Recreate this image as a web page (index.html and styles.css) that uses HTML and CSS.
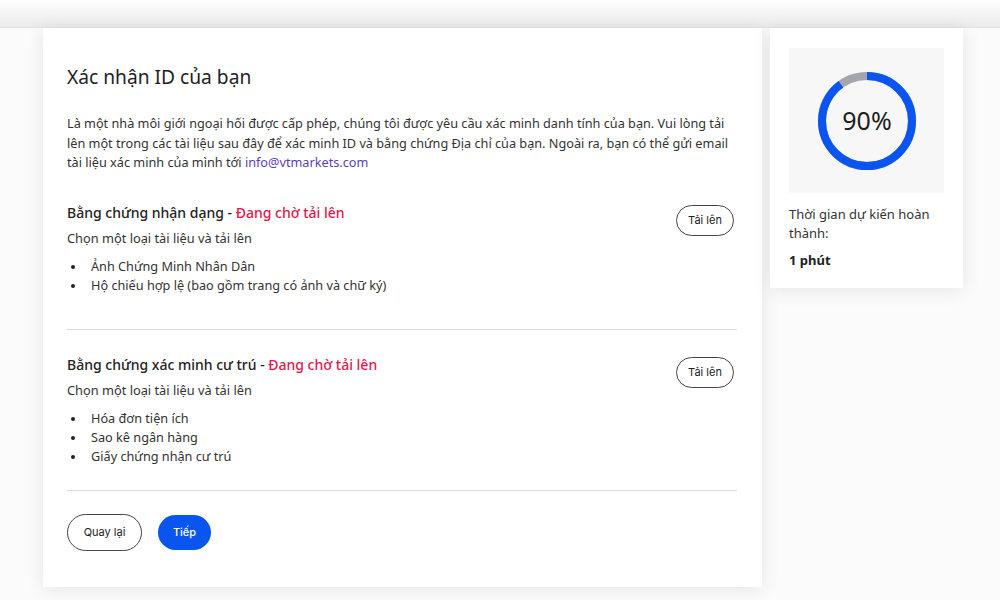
FILE: index.html
```html
<!DOCTYPE html>
<html lang="vi">
<head>
<meta charset="utf-8">
<title>Xác nhận ID</title>
<link rel="stylesheet" href="styles.css">
</head>
<body>
<div class="topband"></div>
<div class="layout">
  <main class="card main-card">
    <h1 class="title">Xác nhận ID của bạn</h1>
    <p class="intro">Là một nhà môi giới ngoại hối được cấp phép, chúng tôi được yêu cầu xác minh danh tính của bạn. Vui lòng tải lên một trong các tài liệu sau đây để xác minh ID và bằng chứng Địa chỉ của bạn. Ngoài ra, bạn có thể gửi email tài liệu xác minh của mình tới <a class="link" href="#">info@vtmarkets.com</a></p>

    <section class="doc doc-first">
      <div class="doc-body">
        <h2 class="doc-title">Bằng chứng nhận dạng - <span class="pending">Đang chờ tải lên</span></h2>
        <div class="doc-sub">Chọn một loại tài liệu và tải lên</div>
        <ul class="doc-list">
          <li>Ảnh Chứng Minh Nhân Dân</li>
          <li>Hộ chiếu hợp lệ (bao gồm trang có ảnh và chữ ký)</li>
        </ul>
      </div>
      <button class="btn-outline upload">Tải lên</button>
    </section>

    <section class="doc doc-second">
      <div class="doc-body">
        <h2 class="doc-title">Bằng chứng xác minh cư trú - <span class="pending">Đang chờ tải lên</span></h2>
        <div class="doc-sub">Chọn một loại tài liệu và tải lên</div>
        <ul class="doc-list">
          <li>Hóa đơn tiện ích</li>
          <li>Sao kê ngân hàng</li>
          <li>Giấy chứng nhận cư trú</li>
        </ul>
      </div>
      <button class="btn-outline upload">Tải lên</button>
    </section>

    <div class="actions">
      <button class="btn-outline back">Quay lại</button>
      <button class="btn-primary">Tiếp</button>
    </div>
  </main>

  <aside class="card side-card">
    <div class="progress-box">
      <svg class="ring" width="100" height="100" viewBox="0 0 100 100">
        <circle cx="50" cy="50" r="45" fill="none" stroke="#a3a6ad" stroke-width="8"/>
        <circle cx="50" cy="50" r="45" fill="none" stroke="#0a55f0" stroke-width="8" stroke-dasharray="254.47 282.74" transform="rotate(-90 50 50)"/>
        <text x="50" y="59" text-anchor="middle" class="ring-text">90%</text>
      </svg>
    </div>
    <div class="eta-label">Thời gian dự kiến hoàn thành:</div>
    <div class="eta-value">1 phút</div>
  </aside>
</div>
</body>
</html>
```
FILE: styles.css
```css
* { box-sizing: border-box; }
html, body { margin: 0; padding: 0; }
body {
  width: 1000px;
  height: 600px;
  overflow: hidden;
  background: #fbfbfb;
  font-family: "Noto Sans", "Open Sans", sans-serif;
  color: #2b2b2b;
}
.topband {
  height: 28px;
  background: linear-gradient(#fdfdfd, #ebebeb);
  border-bottom: 1px solid #e4e4e4;
}
.layout {
  display: flex;
  align-items: flex-start;
  gap: 8px;
  padding-left: 43px;
}
.card {
  background: #fff;
  box-shadow: 0 2px 18px rgba(0, 0, 0, 0.09);
}
.main-card {
  width: 719px;
  height: 559px;
  padding: 36px 25px 0 24px;
}
.title {
  margin: 0;
  font-size: 19.2px;
  line-height: 26px;
  font-weight: 400;
  color: #1e1e1e;
}
.intro {
  margin: 24px 0 0;
  font-size: 12.7px;
  line-height: 19.5px;
  color: #333;
}
.link { color: #5a3fb8; text-decoration: none; }
.doc {
  display: flex;
  justify-content: space-between;
  align-items: flex-start;
  border-bottom: 1px solid #d9d9d9;
}
.doc-first { margin-top: 30px; padding-bottom: 34px; }
.doc-second { padding-top: 25px; padding-bottom: 24px; }
.doc-title {
  margin: 0;
  font-size: 14px;
  line-height: 20px;
  font-weight: 500;
  color: #222;
}
.pending { color: #e0194d; }
.doc-sub {
  margin-top: 5px;
  font-size: 12.8px;
  line-height: 20px;
  color: #333;
}
.doc-list {
  list-style: none;
  margin: 9px 0 0;
  padding: 0;
  font-size: 12.7px;
  line-height: 19px;
  color: #333;
}
.doc-list li {
  display: flex;
  align-items: center;
  height: 19px;
}
.doc-list li::before {
  content: "";
  flex: none;
  width: 4px;
  height: 4px;
  border-radius: 50%;
  background: #222;
  margin: 1px 16px 0 4px;
}
.btn-outline, .btn-primary {
  font-family: Inter, "Noto Sans", sans-serif;
  font-size: 11px;
  cursor: pointer;
  border-radius: 999px;
}
.btn-outline {
  background: #fff;
  border: 1px solid #444;
  color: #222;
}
.upload {
  width: 58px;
  height: 31px;
  margin: 2px 3px 0 0;
  padding: 0;
}
.actions {
  display: flex;
  align-items: center;
  gap: 16px;
  margin-top: 23px;
}
.back {
  width: 75px;
  height: 37px;
  padding: 0;
}
.btn-primary {
  width: 53px;
  height: 35px;
  padding: 0;
  border: none;
  background: #0a55f0;
  color: #fff;
  font-weight: 500;
}
.side-card {
  width: 193px;
  padding: 20px 19px 18px;
}
.progress-box {
  height: 145px;
  background: #f7f7f8;
  display: flex;
  align-items: center;
  justify-content: center;
}
.ring-text {
  font-family: "Noto Sans", sans-serif;
  font-size: 25px;
  fill: #1e1e1e;
}
.eta-label {
  margin-top: 12px;
  font-size: 13px;
  line-height: 19px;
  color: #333;
}
.eta-value {
  margin-top: 7px;
  font-size: 13px;
  line-height: 20px;
  font-weight: 700;
  color: #222;
}
```
